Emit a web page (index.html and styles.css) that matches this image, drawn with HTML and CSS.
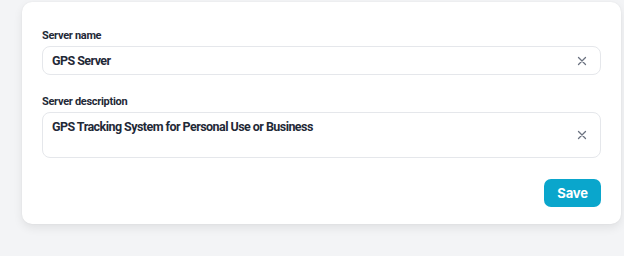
FILE: index.html
```html
<!DOCTYPE html>
<html>
<head>
<meta charset="utf-8">
<link rel="stylesheet" href="styles.css">
</head>
<body>
<div class="card">
  <div class="field">
    <label class="label">Server name</label>
    <div class="input">
      <span class="value">GPS Server</span>
      <svg class="clear" width="10" height="10" viewBox="0 0 10 10"><path d="M1.5 1.5L8.5 8.5M8.5 1.5L1.5 8.5" stroke="#6b7280" stroke-width="1.3" stroke-linecap="round"/></svg>
    </div>
  </div>
  <div class="field">
    <label class="label">Server description</label>
    <div class="input textarea">
      <span class="value">GPS Tracking System for Personal Use or Business</span>
      <svg class="clear" width="10" height="10" viewBox="0 0 10 10"><path d="M1.5 1.5L8.5 8.5M8.5 1.5L1.5 8.5" stroke="#6b7280" stroke-width="1.3" stroke-linecap="round"/></svg>
    </div>
  </div>
  <div class="actions">
    <button class="btn">Save</button>
  </div>
</div>
</body>
</html>
```
FILE: styles.css
```css
* { box-sizing: border-box; }
html, body { margin: 0; padding: 0; }
body {
  background: #f3f4f6;
  font-family: Roboto, "Noto Sans", sans-serif;
  color: #1f2937;
  height: 256px;
  overflow: hidden;
}
.card {
  margin: 2px 3px 0 22px;
  background: #fff;
  border-radius: 10px;
  box-shadow: 0 4px 10px rgba(0,0,0,0.08), 0 0 2px rgba(0,0,0,0.06);
  padding: 27px 20px 17px 20px;
  display: flex;
  flex-direction: column;
  gap: 20px;
}
.field { display: flex; flex-direction: column; gap: 3px; }
.label {
  font-size: 11px;
  font-weight: 700;
  line-height: 14px;
  letter-spacing: -0.3px;
  color: #1f2937;
}
.input {
  height: 29px;
  border: 1px solid #e5e7eb;
  border-radius: 8px;
  padding: 0 13px 0 9px;
  display: flex;
  align-items: center;
  justify-content: space-between;
}
.value {
  font-size: 12.5px;
  font-weight: 700;
  letter-spacing: -0.55px;
  color: #1f2937;
}
.textarea {
  height: 46px;
  align-items: center;
}
.textarea .value {
  align-self: flex-start;
  margin-top: 6px;
}
.clear { flex: none; }
.actions { display: flex; justify-content: flex-end; margin-top: 1px; }
.btn {
  background: #0aa6cc;
  color: #fff;
  border: none;
  border-radius: 7px;
  width: 57px;
  height: 28px;
  font-family: Inter, sans-serif;
  font-size: 13px;
  font-weight: 700;
  letter-spacing: -0.2px;
  padding: 0;
}
```
